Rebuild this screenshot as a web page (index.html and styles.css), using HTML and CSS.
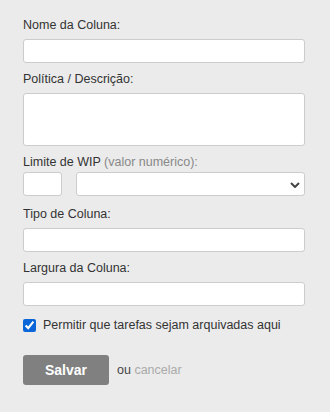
FILE: index.html
```html
<!DOCTYPE html>
<html>
<head>
    <title>Editar Coluna</title>
    <link rel="stylesheet" href="styles.css">
</head>
<body>
    <form class="column-form">
        <div class="form-group">
            <label>Nome da Coluna:</label>
            <input type="text" name="name">
        </div>
        <div class="form-group">
            <label>Política / Descrição:</label>
            <textarea name="policy"></textarea>
        </div>
        <div class="form-group">
            <label class="tight">Limite de WIP <span class="hint">(valor numérico):</span></label>
            <div class="wip-row">
                <input type="text" name="wip" class="wip-input">
                <div class="select-wrap">
                    <select name="wip_type"><option></option></select>
                    <svg class="chevron" width="10" height="6" viewBox="0 0 10 6">
                        <path d="M1 1l4 4 4-4" fill="none" stroke="#444" stroke-width="2"/>
                    </svg>
                </div>
            </div>
        </div>
        <div class="form-group wide-gap">
            <label>Tipo de Coluna:</label>
            <input type="text" name="type">
        </div>
        <div class="form-group">
            <label>Largura da Coluna:</label>
            <input type="text" name="width">
        </div>
        <label class="check-row">
            <input type="checkbox" checked>
            <span>Permitir que tarefas sejam arquivadas aqui</span>
        </label>
        <div class="actions">
            <button type="submit">Salvar</button>
            <span class="or">ou <a href="#">cancelar</a></span>
        </div>
    </form>
</body>
</html>
```

FILE: styles.css
```css
* {
    margin: 0;
    padding: 0;
    box-sizing: border-box;
    font-family: 'Liberation Sans', Arial, sans-serif;
}

body {
    background: #ebebeb;
    color: #333;
    font-size: 12.5px;
}

.column-form {
    padding: 17px 25px 0 23px;
}

.form-group {
    margin-bottom: 8px;
}

.form-group.wide-gap {
    margin-top: 10px;
}

label {
    display: block;
    line-height: 16px;
    margin-bottom: 6px;
    color: #333;
}

label.tight {
    margin-bottom: 2px;
}

.hint {
    color: #888;
}

input[type="text"],
textarea,
select {
    display: block;
    width: 100%;
    height: 24px;
    background: #fff;
    border: 1px solid #ccc;
    border-radius: 3px;
    font-size: 13px;
    color: #333;
}

textarea {
    height: 53px;
    resize: none;
}

.wip-row {
    display: flex;
    gap: 14px;
}

.wip-row .wip-input {
    width: 39px;
    flex: none;
}

.select-wrap {
    position: relative;
    flex: 1;
}

select {
    appearance: none;
    -webkit-appearance: none;
}

.chevron {
    position: absolute;
    right: 5px;
    top: 10px;
    pointer-events: none;
}

.check-row {
    display: flex;
    align-items: center;
    gap: 7px;
    margin-top: 11px;
    margin-bottom: 0;
}

.check-row input {
    width: 13px;
    height: 13px;
    accent-color: #0a66d8;
}

.actions {
    display: flex;
    align-items: center;
    gap: 8px;
    margin-top: 22px;
}

button {
    width: 86px;
    height: 30px;
    background: #808080;
    border: none;
    border-radius: 3px;
    color: #fff;
    font-weight: bold;
    font-size: 14px;
}

.or {
    color: #444;
}

.or a {
    color: #aaa;
    text-decoration: none;
}
```
